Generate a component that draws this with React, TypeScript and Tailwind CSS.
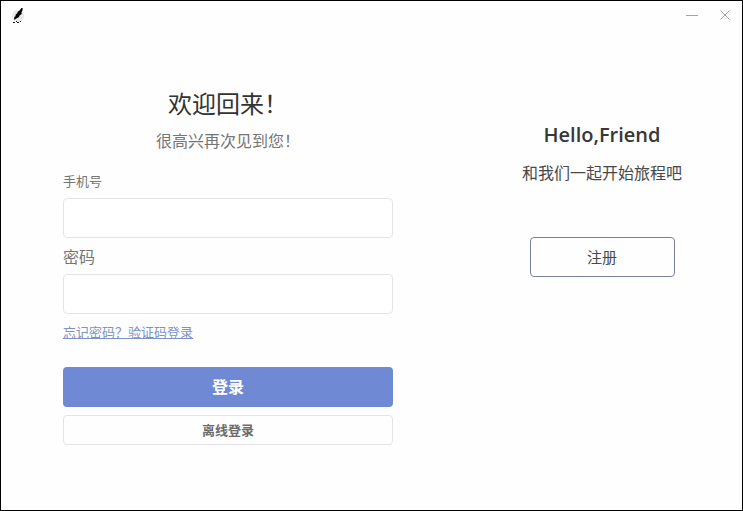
const FeatherIcon = () => (
  <svg viewBox="0 0 14 18" className="w-[14px] h-[18px]" aria-hidden="true">
    <circle cx="7" cy="10" r="6" fill="#e9e9e9" />
    <path d="M10.4 2H11.6V4L10.6 6V8L8.6 9.4L8 11L5.4 12.4L4 13.4H3L3.4 11L4.6 10V8.4L6 7.6L7 5.6L8.6 4.4Z" fill="#000" />
    <path d="M2 16.5h2M5 15.5h1M6 16.5h2M9 15.5h1" stroke="#111" strokeWidth="1" fill="none" />
  </svg>
);

const TitleBar = () => (
  <header className="flex h-7 items-center justify-between pl-[10px] pr-3">
    <FeatherIcon />
    <div className="flex items-center gap-[22px] text-[#a3a3a3]">
      <button type="button" aria-label="最小化">
        <svg viewBox="0 0 12 12" className="block w-3 h-3" aria-hidden="true">
          <path d="M0 6.5h12" stroke="currentColor" strokeWidth="1" />
        </svg>
      </button>
      <button type="button" aria-label="关闭">
        <svg viewBox="0 0 10 10" className="block w-[10px] h-[10px]" aria-hidden="true">
          <path d="M0.5 0.5l9 9M9.5 0.5l-9 9" stroke="currentColor" strokeWidth="1" />
        </svg>
      </button>
    </div>
  </header>
);

const LoginForm = () => (
  <form className="flex flex-1 flex-col pt-[59px] pb-8 pl-[62px] pr-[69px] text-[#757575]">
    <h1 className="text-center text-2xl leading-8 text-[#333]">欢迎回来！</h1>
    <p className="mt-[9px] text-center text-base leading-6">很高兴再次见到您！</p>

    <label htmlFor="phone" className="mt-[18px] text-[13px] leading-5">手机号</label>
    <input
      id="phone"
      type="tel"
      className="mt-[7px] h-10 w-full rounded-[4px] border border-[#e4e4e7] bg-white px-3 text-base outline-none"
    />

    <label htmlFor="password" className="mt-[9px] text-base leading-5">密码</label>
    <input
      id="password"
      type="password"
      className="mt-[7px] h-10 w-full rounded-[4px] border border-[#e4e4e7] bg-white px-3 text-base outline-none"
    />

    <a href="#forgot" className="mt-2 self-start text-[13px] leading-5 text-[#7c92c4] underline">
      忘记密码？验证码登录
    </a>

    <button type="submit" className="mt-[25px] h-10 w-full rounded-[4px] bg-[#7089d5] text-base font-bold text-white">
      登录
    </button>
    <button type="button" className="mt-2 h-[30px] w-full rounded-[4px] border border-[#e4e4e7] text-[13px] leading-5 font-bold text-[#6b6b6b]">
      离线登录
    </button>
  </form>
);

const RegisterPanel = () => (
  <section className="flex w-[280px] flex-col items-center pt-[92px] text-[#484848]">
    <h2 className="font-['Open_Sans','Noto_Sans',sans-serif] text-xl leading-7 font-semibold text-[#383838]">Hello,Friend</h2>
    <p className="mt-3 text-base leading-6">和我们一起开始旅程吧</p>
    <button type="button" className="mt-[52px] h-10 w-[145px] rounded-[4px] border border-[#75839a] text-[15px]">
      注册
    </button>
  </section>
);

export default function App() {
  return (
    <div className="flex min-h-screen flex-col border border-black bg-[#fefefe] font-['Noto_Sans','Noto_Sans_CJK_SC',sans-serif]">
      <TitleBar />
      <main className="flex flex-1">
        <LoginForm />
        <RegisterPanel />
      </main>
    </div>
  );
}
